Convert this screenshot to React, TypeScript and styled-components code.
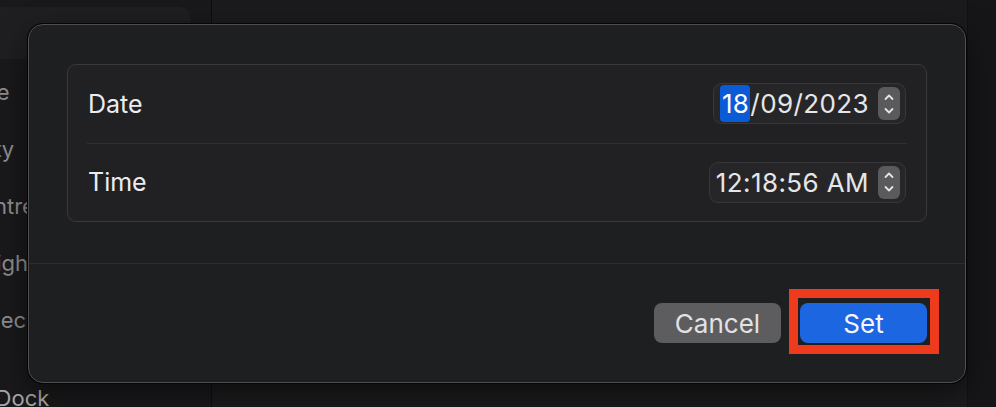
import React, {useState} from 'react';
import styled, {createGlobalStyle} from "styled-components";

type RowType = {
    id: string
    label: string
}

const sidebarItems: Array<RowType> = [
    {id: 'appearance', label: 'Appearance'},
    {id: 'accessibility', label: 'Accessibility'},
    {id: 'control', label: 'Control Centre'},
    {id: 'siri', label: 'Siri & Spotlight'},
    {id: 'privacy', label: 'Privacy & Security'},
]

const Stepper = () => (
    <StepperStyled>
        <svg width="12" height="26" viewBox="0 0 12 26" fill="none" stroke="#e4e4e6" strokeWidth="1.8"
             strokeLinecap="round" strokeLinejoin="round">
            <polyline points="2.5,8 6,4.5 9.5,8"/>
            <polyline points="2.5,18 6,21.5 9.5,18"/>
        </svg>
    </StepperStyled>
)

export default function App() {

    let [day] = useState('18');

    return (
        <>
            <GlobalStyle/>
            <Page>
                <Sidebar>
                    <Search/>
                    <ul>
                        {sidebarItems.map((item) => <SideItem key={item.id}>{item.label}</SideItem>)}
                        <SideItem isGroupStart={true} isBright={true}>Desktop &amp; Dock</SideItem>
                    </ul>
                </Sidebar>
                <Main/>

                <Dialog>
                    <Group>
                        <Row>
                            <Label>Date</Label>
                            <Field>
                                <Selected>{day}</Selected>/09/2023
                                <Stepper/>
                            </Field>
                        </Row>
                        <RowDivider/>
                        <Row>
                            <Label>Time</Label>
                            <Field>
                                12:18:56 AM
                                <Stepper/>
                            </Field>
                        </Row>
                    </Group>

                    <Footer>
                        <Button>Cancel</Button>
                        <Button isPrimary={true} isMarked={true}>Set</Button>
                    </Footer>
                </Dialog>
            </Page>
        </>
    );
}

type SideItemPropsType = {
    isGroupStart?: boolean
    isBright?: boolean
}
type ButtonPropsType = {
    isPrimary?: boolean
    isMarked?: boolean
}

const GlobalStyle = createGlobalStyle`
  body {
    margin: 0;
    background: #161618;
    font-family: Inter, "Noto Sans", sans-serif;
  }
`
const Page = styled.div`
  position: relative;
  display: flex;
  width: 996px;
  height: 407px;
  overflow: hidden;
`
const Sidebar = styled.div`
  width: 212px;
  flex-shrink: 0;
  background: #19191b;
  border-right: 1px solid #0e0e10;
  padding-top: 7px;
  box-sizing: border-box;

  ul {
    list-style: none;
    margin: 0;
    padding: 0;
  }
`
const Search = styled.div`
  width: 190px;
  height: 52px;
  background: #1f1f21;
  border-radius: 0 10px 10px 0;
  margin-bottom: 5px;
`
const SideItem = styled.li<SideItemPropsType>`
  height: 57px;
  line-height: 57px;
  margin-left: -117px;
  margin-top: ${props => props.isGroupStart ? "21px" : "0"};
  white-space: nowrap;
  font-size: 22px;
  color: ${props => props.isBright ? "#a9a9ab" : "#8d8d8f"};
`
const Main = styled.div`
  flex: 1;
  background: #1b1b1d;
  border-right: 1px solid #111113;
  margin-right: 28px;
`
const Dialog = styled.div`
  position: absolute;
  left: 28px;
  top: 24px;
  width: 938px;
  height: 359px;
  box-sizing: border-box;
  display: flex;
  flex-direction: column;
  background: #1e1f21;
  border: 1px solid #4f4f52;
  border-radius: 15px;
  box-shadow: 0 0 0 1px #050506, 0 10px 30px rgba(0, 0, 0, 0.5);
`
const Group = styled.div`
  margin: 39px 38px 0 38px;
  height: 158px;
  box-sizing: border-box;
  display: flex;
  flex-direction: column;
  background: #212123;
  border: 1px solid #39393b;
  border-radius: 9px;
`
const Row = styled.div`
  flex: 1;
  display: flex;
  align-items: center;
  justify-content: space-between;
  padding: 0 20px 0 20px;
`
const RowDivider = styled.div`
  height: 1px;
  margin: 0 19px;
  background: #303032;
`
const Label = styled.span`
  font-size: 25px;
  color: #ececee;
`
const Field = styled.div`
  display: flex;
  align-items: center;
  height: 41px;
  box-sizing: border-box;
  padding: 0 5px 0 6px;
  gap: 9px;
  background: #262628;
  border: 1px solid #373739;
  border-radius: 9px;
  font-size: 26px;
  letter-spacing: 0.4px;
  color: #e6e6e8;
  white-space: pre;

  & > svg {
    display: block;
  }
`
const Selected = styled.span`
  background: #0b5bd6;
  color: #ffffff;
  border-radius: 4px;
  padding: 3px 1px 3px 2px;
  margin-right: -9px;
`
const StepperStyled = styled.div`
  display: flex;
  align-items: center;
  justify-content: center;
  width: 22px;
  height: 33px;
  background: #5a5a5d;
  border-radius: 6px;
`
const Footer = styled.div`
  flex: 1;
  margin-top: 41px;
  border-top: 1px solid #2c2c2e;
  display: flex;
  align-items: center;
  justify-content: flex-end;
  gap: 19px;
  padding: 0 38px 0 0;
`
const Button = styled.button<ButtonPropsType>`
  position: relative;
  width: 127px;
  height: 40px;
  border: none;
  border-radius: 8px;
  font-family: Inter, "Noto Sans", sans-serif;
  font-size: 26px;
  color: ${props => props.isPrimary ? "#f4f6fb" : "#e2e2e4"};
  background: ${props => props.isPrimary ? "#1d66e2" : "#5d5d60"};

  &::after {
    content: "";
    display: ${props => props.isMarked ? "block" : "none"};
    position: absolute;
    left: -11px;
    right: -12px;
    top: -14px;
    bottom: -11px;
    border: 9px solid #ee3b1d;
  }
`
